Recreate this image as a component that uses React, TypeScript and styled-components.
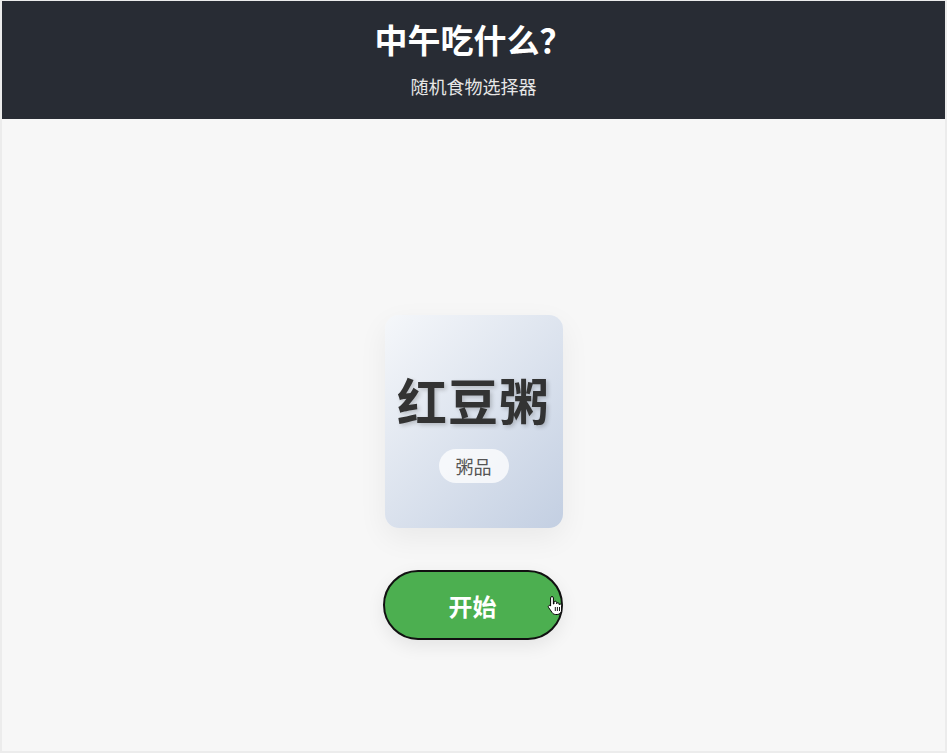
import React from 'react';
import styled, { createGlobalStyle } from 'styled-components';

const GlobalStyle = createGlobalStyle`
  html, body {
    margin: 0;
    padding: 0;
    background: #ececec;
  }
  body {
    font-family: "Noto Sans CJK SC", "Noto Sans", sans-serif;
  }
`;

// ==========================================================
// Styled Components
// ==========================================================

const Page = styled.div`
  box-sizing: border-box;
  height: 753px;
  padding: 1px 2px 2px 2px;
  display: flex;
  flex-direction: column;
`;

const Header = styled.header`
  background: #282c34;
  color: #ffffff;
  height: 118px;
  display: flex;
  flex-direction: column;
  align-items: center;
  padding-top: 16px;
  box-sizing: border-box;
`;

const Title = styled.h1`
  margin: 0;
  font-size: 33px;
  font-weight: 700;
  line-height: 44px;
`;

const Subtitle = styled.p`
  margin: 13px 0 0;
  font-size: 18px;
  font-weight: 400;
  line-height: 24px;
  color: #e6e6e6;
`;

const Main = styled.main`
  flex: 1;
  background: #f7f7f7;
  display: flex;
  flex-direction: column;
  align-items: center;
  padding-top: 196px;
`;

const FoodCard = styled.div`
  width: 178px;
  height: 213px;
  box-sizing: border-box;
  border-radius: 14px;
  background: linear-gradient(135deg, #f5f7fa 0%, #c3cfe2 100%);
  box-shadow: 0 10px 30px rgba(0, 0, 0, 0.06);
  display: flex;
  flex-direction: column;
  align-items: center;
  justify-content: center;
  gap: 20px;
  padding-top: 8px;
`;

const FoodName = styled.div`
  font-size: 50px;
  font-weight: 700;
  color: #333333;
  line-height: 60px;
  letter-spacing: 1px;
  text-shadow: 2px 2px 4px rgba(0, 0, 0, 0.2);
`;

const CategoryTag = styled.span`
  background: rgba(255, 255, 255, 0.75);
  color: #555555;
  font-size: 18px;
  line-height: 22px;
  padding: 6px 17px;
  border-radius: 20px;
`;

const StartButton = styled.button`
  position: relative;
  margin-top: 42px;
  margin-right: 2px;
  width: 180px;
  height: 70px;
  border-radius: 35px;
  border: 2px solid #111111;
  background: #4caf50;
  color: #ffffff;
  font-family: "Noto Sans CJK SC", "Noto Sans", sans-serif;
  font-size: 24px;
  font-weight: 700;
  cursor: pointer;
  box-shadow: 0 6px 18px rgba(0, 0, 0, 0.08);
`;

const Cursor = styled.svg`
  position: absolute;
  right: -2px;
  top: 23px;
  width: 16px;
  height: 20px;
`;

// ==========================================================
// Components
// ==========================================================

const HandCursor: React.FC = () => (
  <Cursor viewBox="0 0 16 20">
    <path
      d="M5 1.5c.8 0 1.4.6 1.4 1.4V9l.6-.1V7.5c0-.8.6-1.3 1.3-1.3s1.3.5 1.3 1.3v1.2c.2-.6.7-1 1.3-1 .7 0 1.3.6 1.3 1.3v.8c.2-.4.7-.7 1.2-.7.7 0 1.2.6 1.2 1.3v4.6c0 2.5-1.9 4.5-4.4 4.5H8.6c-1.4 0-2.6-.7-3.4-1.8L1.5 12.4c-.4-.6-.3-1.4.3-1.8.6-.4 1.300-.3 1.7.2l.1.2V2.9c0-.8.6-1.4 1.4-1.4z"
      fill="#ffffff"
      stroke="#000000"
      strokeWidth="1"
      strokeLinejoin="round"
    />
    <path d="M8.3 12v4M10.4 12v4M12.5 12v4" stroke="#000000" strokeWidth="0.9" />
  </Cursor>
);

const App: React.FC = () => {
  const food = { name: '红豆粥', category: '粥品' };

  return (
    <>
      <GlobalStyle />
      <Page>
        <Header>
          <Title>中午吃什么？</Title>
          <Subtitle>随机食物选择器</Subtitle>
        </Header>
        <Main>
          <FoodCard>
            <FoodName>{food.name}</FoodName>
            <CategoryTag>{food.category}</CategoryTag>
          </FoodCard>
          <StartButton>
            开始
            <HandCursor />
          </StartButton>
        </Main>
      </Page>
    </>
  );
};

export default App;
